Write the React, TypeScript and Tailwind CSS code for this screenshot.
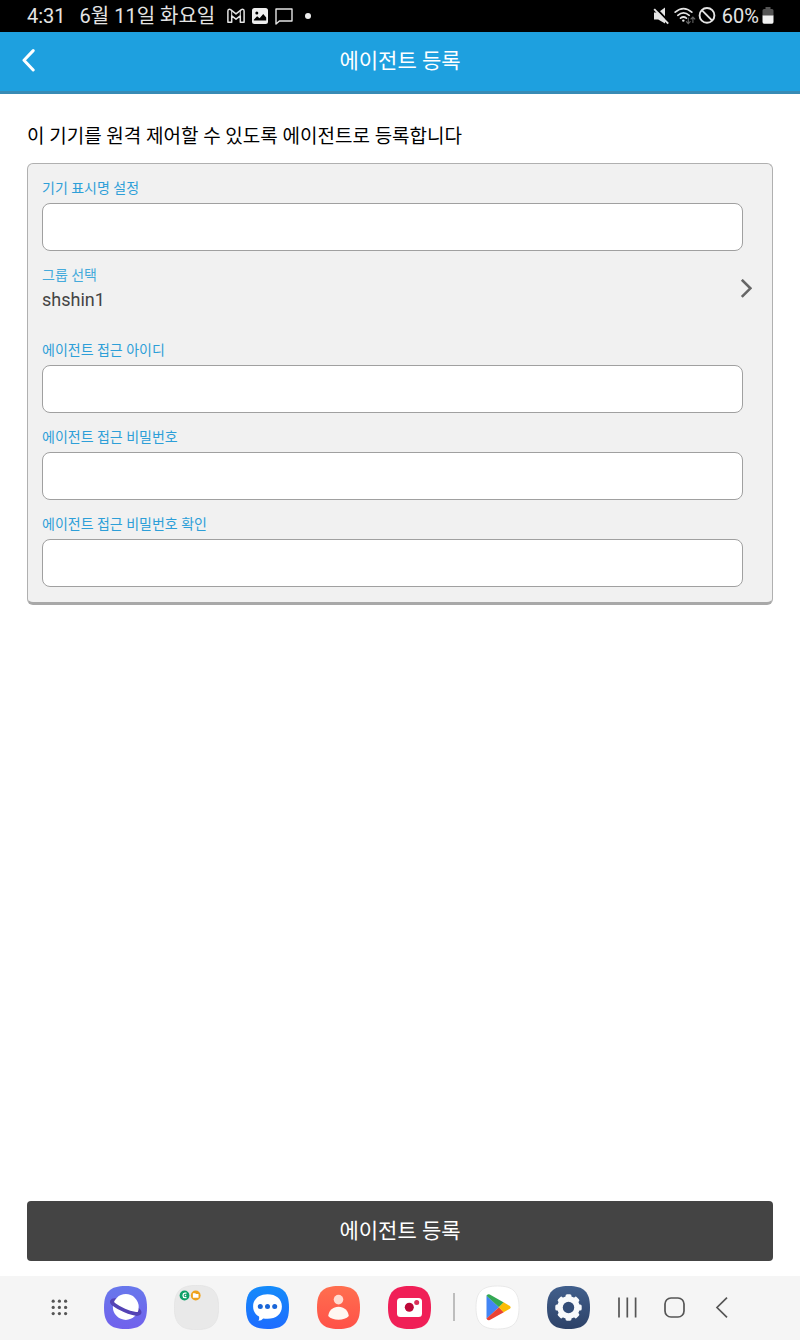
import { useState, type ReactNode } from 'react';

const SQUIRCLE = 'M22.5 1C38 1 44 7 44 22.5S38 44 22.5 44S1 38 1 22.5S7 1 22.5 1Z';

/* ── Status bar ── */

function StatusBar() {
  return (
    <div className="flex h-8 items-center justify-between bg-black pl-[27px] pr-[26px] text-xl text-[#e4e4e4]">
      <div className="flex items-center">
        <span>4:31</span>
        <span className="ml-3.5">6월 11일 화요일</span>
        <svg className="ml-3 h-4 w-[18px]" viewBox="0 0 18 16" fill="none" stroke="currentColor" strokeWidth="1.5" strokeLinejoin="round">
          <path d="M.9 3Q.9 1.200 2.300 1.200Q3 1.200 3.600 1.700L9 5.900L14.400 1.700Q15 1.200 15.700 1.200Q17.100 1.200 17.100 3V14.300H13.300V7.900L9 11.200L4.700 7.900V14.300H.9Z" />
          <path d="M4.700 2.800V7.900M13.300 2.800V7.900" strokeWidth="1" />
        </svg>
        <svg className="ml-[7px] h-4 w-4" viewBox="0 0 16 16">
          <rect width="16" height="16" rx="2.5" fill="#eeeeee" />
          <circle cx="4.8" cy="5" r="1.5" fill="#000" />
          <path d="M1.8 11.8L5.1 8.3L7.6 10.2L11.2 6L14.2 9.4V12.6H1.8Z" fill="#000" />
        </svg>
        <svg className="ml-[7px] h-[17px] w-[18px]" viewBox="0 0 18 17" fill="none" stroke="currentColor" strokeWidth="1.4" strokeLinejoin="round">
          <path d="M1 1H17V13H4.4L1 16Z" />
        </svg>
        <span className="ml-3 h-1.5 w-1.5 rounded-full bg-[#eeeeee]" />
      </div>
      <div className="flex items-center">
        <svg className="h-[18px] w-[17px]" viewBox="0 0 17 18">
          <path d="M1 5.400H5.200L12 .600V16.400L5.200 12.400H1Z" fill="#e4e4e4" />
          <path d="M2.400 .800L16.600 15.600" stroke="#000" strokeWidth="2" />
          <path d="M1.200 2.200L15.200 16.600" stroke="#e4e4e4" strokeWidth="1.900" />
        </svg>
        <svg className="ml-1 h-[18px] w-[22px]" viewBox="0 0 22 18" fill="none" strokeLinecap="round">
          <g stroke="#e4e4e4" strokeWidth="1.7">
            <path d="M1.2 5.2Q9.5 -2 17.8 5.2" />
            <path d="M3.8 8.3Q9.5 3.4 15.2 8.3" />
            <path d="M6.5 11.2Q9.5 8.8 12.4 11.2" />
          </g>
          <circle cx="9.3" cy="13.6" r="1.2" fill="#e4e4e4" />
          <path d="M14.3 11V16.4M12.4 14.7L14.3 16.6L16.2 14.7M18.9 15.4V10.2M17 12L18.9 10L20.8 12" stroke="#666" strokeWidth="1.1" />
        </svg>
        <svg className="ml-0.5 h-[18px] w-[18px]" viewBox="0 0 18 18" fill="none" stroke="#e4e4e4" strokeWidth="1.9">
          <circle cx="9" cy="7.8" r="7.4" transform="translate(0 .6)" />
          <path d="M3.800 3.200L14.200 13.600" />
        </svg>
        <span className="ml-1.5">60%</span>
        <svg className="ml-[3px] h-[18px] w-3" viewBox="0 0 12 18">
          <path d="M3.5 0H8.5V2H10Q11.5 2 11.5 3.5V9H.5V3.5Q.5 2 2 2H3.5Z" fill="#555" />
          <path d="M.5 8.5H11.5V15Q11.5 16.8 10 16.8H2Q.5 16.8 .5 15Z" fill="#f2f2f2" />
        </svg>
      </div>
    </div>
  );
}

/* ── Form ── */

function Field({ id, label, type = 'text' }: { id: string; label: string; type?: string }) {
  const [value, setValue] = useState('');
  return (
    <div className="mr-[9px]">
      <label htmlFor={id} className="block text-sm leading-5 text-[#2d9fd8]">
        {label}
      </label>
      <input
        id={id}
        type={type}
        value={value}
        onChange={(e) => setValue(e.target.value)}
        className="mt-[5px] block h-12 w-full rounded-lg border border-[#a0a0a0] bg-white px-3 text-lg text-[#333] outline-none"
      />
    </div>
  );
}

function GroupSelect() {
  return (
    <button type="button" className="mb-3.5 flex w-full items-center justify-between text-left">
      <span>
        <span className="block text-sm leading-5 text-[#45aadb]">그룹 선택</span>
        <span className="mt-[3px] block text-lg leading-6 text-[#444]">shshin1</span>
      </span>
      <svg className="h-5 w-3" viewBox="0 0 12 20" fill="none" stroke="#666" strokeWidth="2.6">
        <path d="M1.800 .800L10.400 9.300L1.800 17.800" />
      </svg>
    </button>
  );
}

/* ── Taskbar ── */

function AppIcon({ label, fill, children }: { label: string; fill: string; children: ReactNode }) {
  return (
    <button type="button" aria-label={label} className="shrink-0">
      <svg className="h-[45px] w-[45px]" viewBox="0 0 45 45">
        <path d={SQUIRCLE} fill={fill} />
        {children}
      </svg>
    </button>
  );
}

function Gradients() {
  const stops = [
    ['internet', '#6878ec', '#7161ec'],
    ['messages', '#148bfa', '#1e6cff'],
    ['contacts', '#ff6f4f', '#ff5148'],
    ['settings', '#415f8c', '#2d4268'],
  ];
  return (
    <svg className="absolute h-0 w-0" aria-hidden="true">
      <defs>
        {stops.map(([id, from, to]) => (
          <linearGradient key={id} id={id} x1="0" y1="0" x2="0" y2="1">
            <stop stopColor={from} />
            <stop offset="1" stopColor={to} />
          </linearGradient>
        ))}
      </defs>
    </svg>
  );
}

function Taskbar() {
  return (
    <nav className="flex h-16 items-center bg-[#f5f5f5] pb-0.5 pl-[51px]">
      <Gradients />
      <button type="button" aria-label="앱스" className="mr-[35px] shrink-0">
        <svg className="h-[17px] w-[17px]" viewBox="0 0 17 17" fill="#555">
          {[2.2, 8.4, 14.6].map((y) =>
            [2.2, 8.4, 14.6].map((x) => <circle key={`${x}-${y}`} cx={x} cy={y} r="1.6" />),
          )}
        </svg>
      </button>
      <div className="flex gap-[26px]">
        <AppIcon label="인터넷" fill="url(#internet)">
          <g transform="rotate(23 22.8 22)" fill="none" stroke="#5443b5" strokeWidth="3.6">
            <ellipse cx="22.8" cy="22" rx="15" ry="3.6" />
          </g>
          <circle cx="22.8" cy="22" r="12.9" fill="#fff" />
          <path d="M7.8 22A15 3.6 0 0 0 37.8 22" transform="rotate(23 22.8 22)" fill="none" stroke="#5443b5" strokeWidth="3.6" />
        </AppIcon>
        <button type="button" aria-label="폴더" className="shrink-0">
          <svg className="h-[45px] w-[45px]" viewBox="0 0 45 45">
            <path d="M22.5 .3C38.5 .3 44.7 6.5 44.7 22.5S38.5 44.7 22.5 44.7S.3 38.5 .3 22.5S6.5 .3 22.5 .3Z" fill="#e9e9e9" stroke="#dedede" strokeWidth=".5" />
            <circle cx="10.5" cy="10.5" r="4.9" fill="#0da067" />
            <path d="M12.5 8.2H10.9Q9 8.4 9 10.4T10.9 12.7H12.5M10.8 10.5H12.2" fill="none" stroke="#fff" strokeWidth="1.3" />
            <circle cx="21.7" cy="10.5" r="4.9" fill="#eea21d" />
            <path d="M18.9 8.2H21.3L22 9H24.5V12.8H18.9Z" fill="#fff" />
          </svg>
        </button>
        <AppIcon label="메시지" fill="url(#messages)">
          <path d="M22.5 9.2C31 9.2 36.9 14 36.9 21.5S31 33.8 22.5 33.8Q20 33.8 18.2 33.4Q16.5 35.6 13.4 35.8Q14.6 34 14 31.5C10.200 29.400 8.100 26 8.100 21.500C8.100 14 14 9.200 22.500 9.200Z" fill="#fff" />
          <g fill="#1a66d8">
            <circle cx="15.3" cy="21.500" r="2.500" />
            <circle cx="22.500" cy="21.500" r="2.500" />
            <circle cx="29.700" cy="21.500" r="2.500" />
          </g>
        </AppIcon>
        <AppIcon label="연락처" fill="url(#contacts)">
          <circle cx="22.5" cy="14.6" r="4.800" fill="#ffdcd2" />
          <path d="M22.500 21.800C28 21.800 32 25.300 32.800 31C30.500 33.500 26.800 34.800 22.500 34.800S14.500 33.500 12.200 31C13 25.300 17 21.800 22.500 21.800Z" fill="#fff7f2" />
        </AppIcon>
        <AppIcon label="카메라" fill="#f01f57">
          <rect x="10" y="13" width="25" height="19" rx="3.500" fill="#fff" />
          <circle cx="22.300" cy="22.300" r="4.500" fill="#bd0838" />
          <circle cx="29.700" cy="17.400" r="2.500" fill="#d93059" />
        </AppIcon>
      </div>
      <span className="mr-5 ml-[21px] h-7 w-0.5 shrink-0 bg-[#bdbdbd]" />
      <div className="flex gap-[26px]">
        <AppIcon label="Play 스토어" fill="#fff">
          <path d={SQUIRCLE} fill="none" stroke="#e4e4e4" strokeWidth=".8" />
          <path d="M11.500 10.500V33.800L24 22.300Z" fill="#4285f4" />
          <path d="M11.500 10.800Q12.200 8.600 14.800 9.500L28.800 17.400L24 22.300Z" fill="#34a853" />
          <path d="M11.500 33.600Q12.200 36 14.800 35.100L28.800 27.200L24 22.300Z" fill="#ea4335" />
          <path d="M28.600 17.300L34.800 20.900Q36.600 22.300 34.800 23.700L28.600 27.300L23.800 22.300Z" fill="#fbbc04" />
        </AppIcon>
        <AppIcon label="설정" fill="url(#settings)">
          <g fill="#f8fafc">
            <circle cx="22.500" cy="22.500" r="11.200" />
            {[0, 45, 90, 135, 180, 225, 270, 315].map((deg) => (
              <rect key={deg} x="19.500" y="9.300" width="6" height="6" rx="1.600" transform={`rotate(${deg} 22.5 22.5)`} />
            ))}
          </g>
          <circle cx="22.500" cy="22.500" r="5.700" fill="#334d78" />
        </AppIcon>
      </div>
      <button type="button" aria-label="최근 앱" className="ml-[26px] shrink-0">
        <svg className="h-[21px] w-5" viewBox="0 0 20 21" stroke="#555" strokeWidth="1.700">
          <path d="M2 .5V20.500M10.300 .5V20.500M18.600 .5V20.500" />
        </svg>
      </button>
      <button type="button" aria-label="홈" className="ml-[27px] shrink-0">
        <svg className="h-[21px] w-[21px]" viewBox="0 0 21 21" fill="none" stroke="#555" strokeWidth="1.700">
          <rect x="1" y="1" width="19" height="19" rx="6" />
        </svg>
      </button>
      <button type="button" aria-label="뒤로" className="ml-[30px] shrink-0">
        <svg className="h-[21px] w-[13px]" viewBox="0 0 13 21" fill="none" stroke="#555" strokeWidth="1.700">
          <path d="M12 .6L2 10.500L12 20.400" />
        </svg>
      </button>
    </nav>
  );
}

export default function App() {
  return (
    <div className="flex min-h-screen flex-col bg-white font-['Roboto','Noto_Sans_CJK_KR',sans-serif]">
      <StatusBar />
      <header className="grid h-[62px] grid-cols-[60px_1fr_60px] items-center border-b-3 border-[#388bb5] bg-[#1ea0df] pb-0.5 text-white">
        <button type="button" aria-label="뒤로 가기" className="pl-[22px]">
          <svg className="h-6 w-[13px]" viewBox="0 0 13 24" fill="none" stroke="currentColor" strokeWidth="3" strokeLinecap="round" strokeLinejoin="round">
            <path d="M11.200 1.600L2 11.200L11.200 21" />
          </svg>
        </button>
        <h1 className="text-center text-[21px] leading-7">에이전트 등록</h1>
      </header>

      <form className="flex flex-1 flex-col px-[27px]" onSubmit={(e) => e.preventDefault()}>
        <p className="mt-[29px] text-[19px] leading-7 text-black">
          이 기기를 원격 제어할 수 있도록 에이전트로 등록합니다
        </p>
        <div className="mt-3 flex flex-col gap-3.5 rounded-md border border-b-3 border-[#b0b0b0] border-b-[#a8a8a8] bg-[#f1f1f1] pt-3.5 pr-5 pb-[15px] pl-3.5">
          <Field id="display-name" label="기기 표시명 설정" />
          <GroupSelect />
          <Field id="agent-id" label="에이전트 접근 아이디" />
          <Field id="agent-password" label="에이전트 접근 비밀번호" type="password" />
          <Field id="agent-password-confirm" label="에이전트 접근 비밀번호 확인" type="password" />
        </div>
        <button type="submit" className="mt-auto mb-[15px] h-[60px] rounded-sm bg-[#444] text-[21px] leading-7 text-white">
          에이전트 등록
        </button>
      </form>

      <Taskbar />
    </div>
  );
}
